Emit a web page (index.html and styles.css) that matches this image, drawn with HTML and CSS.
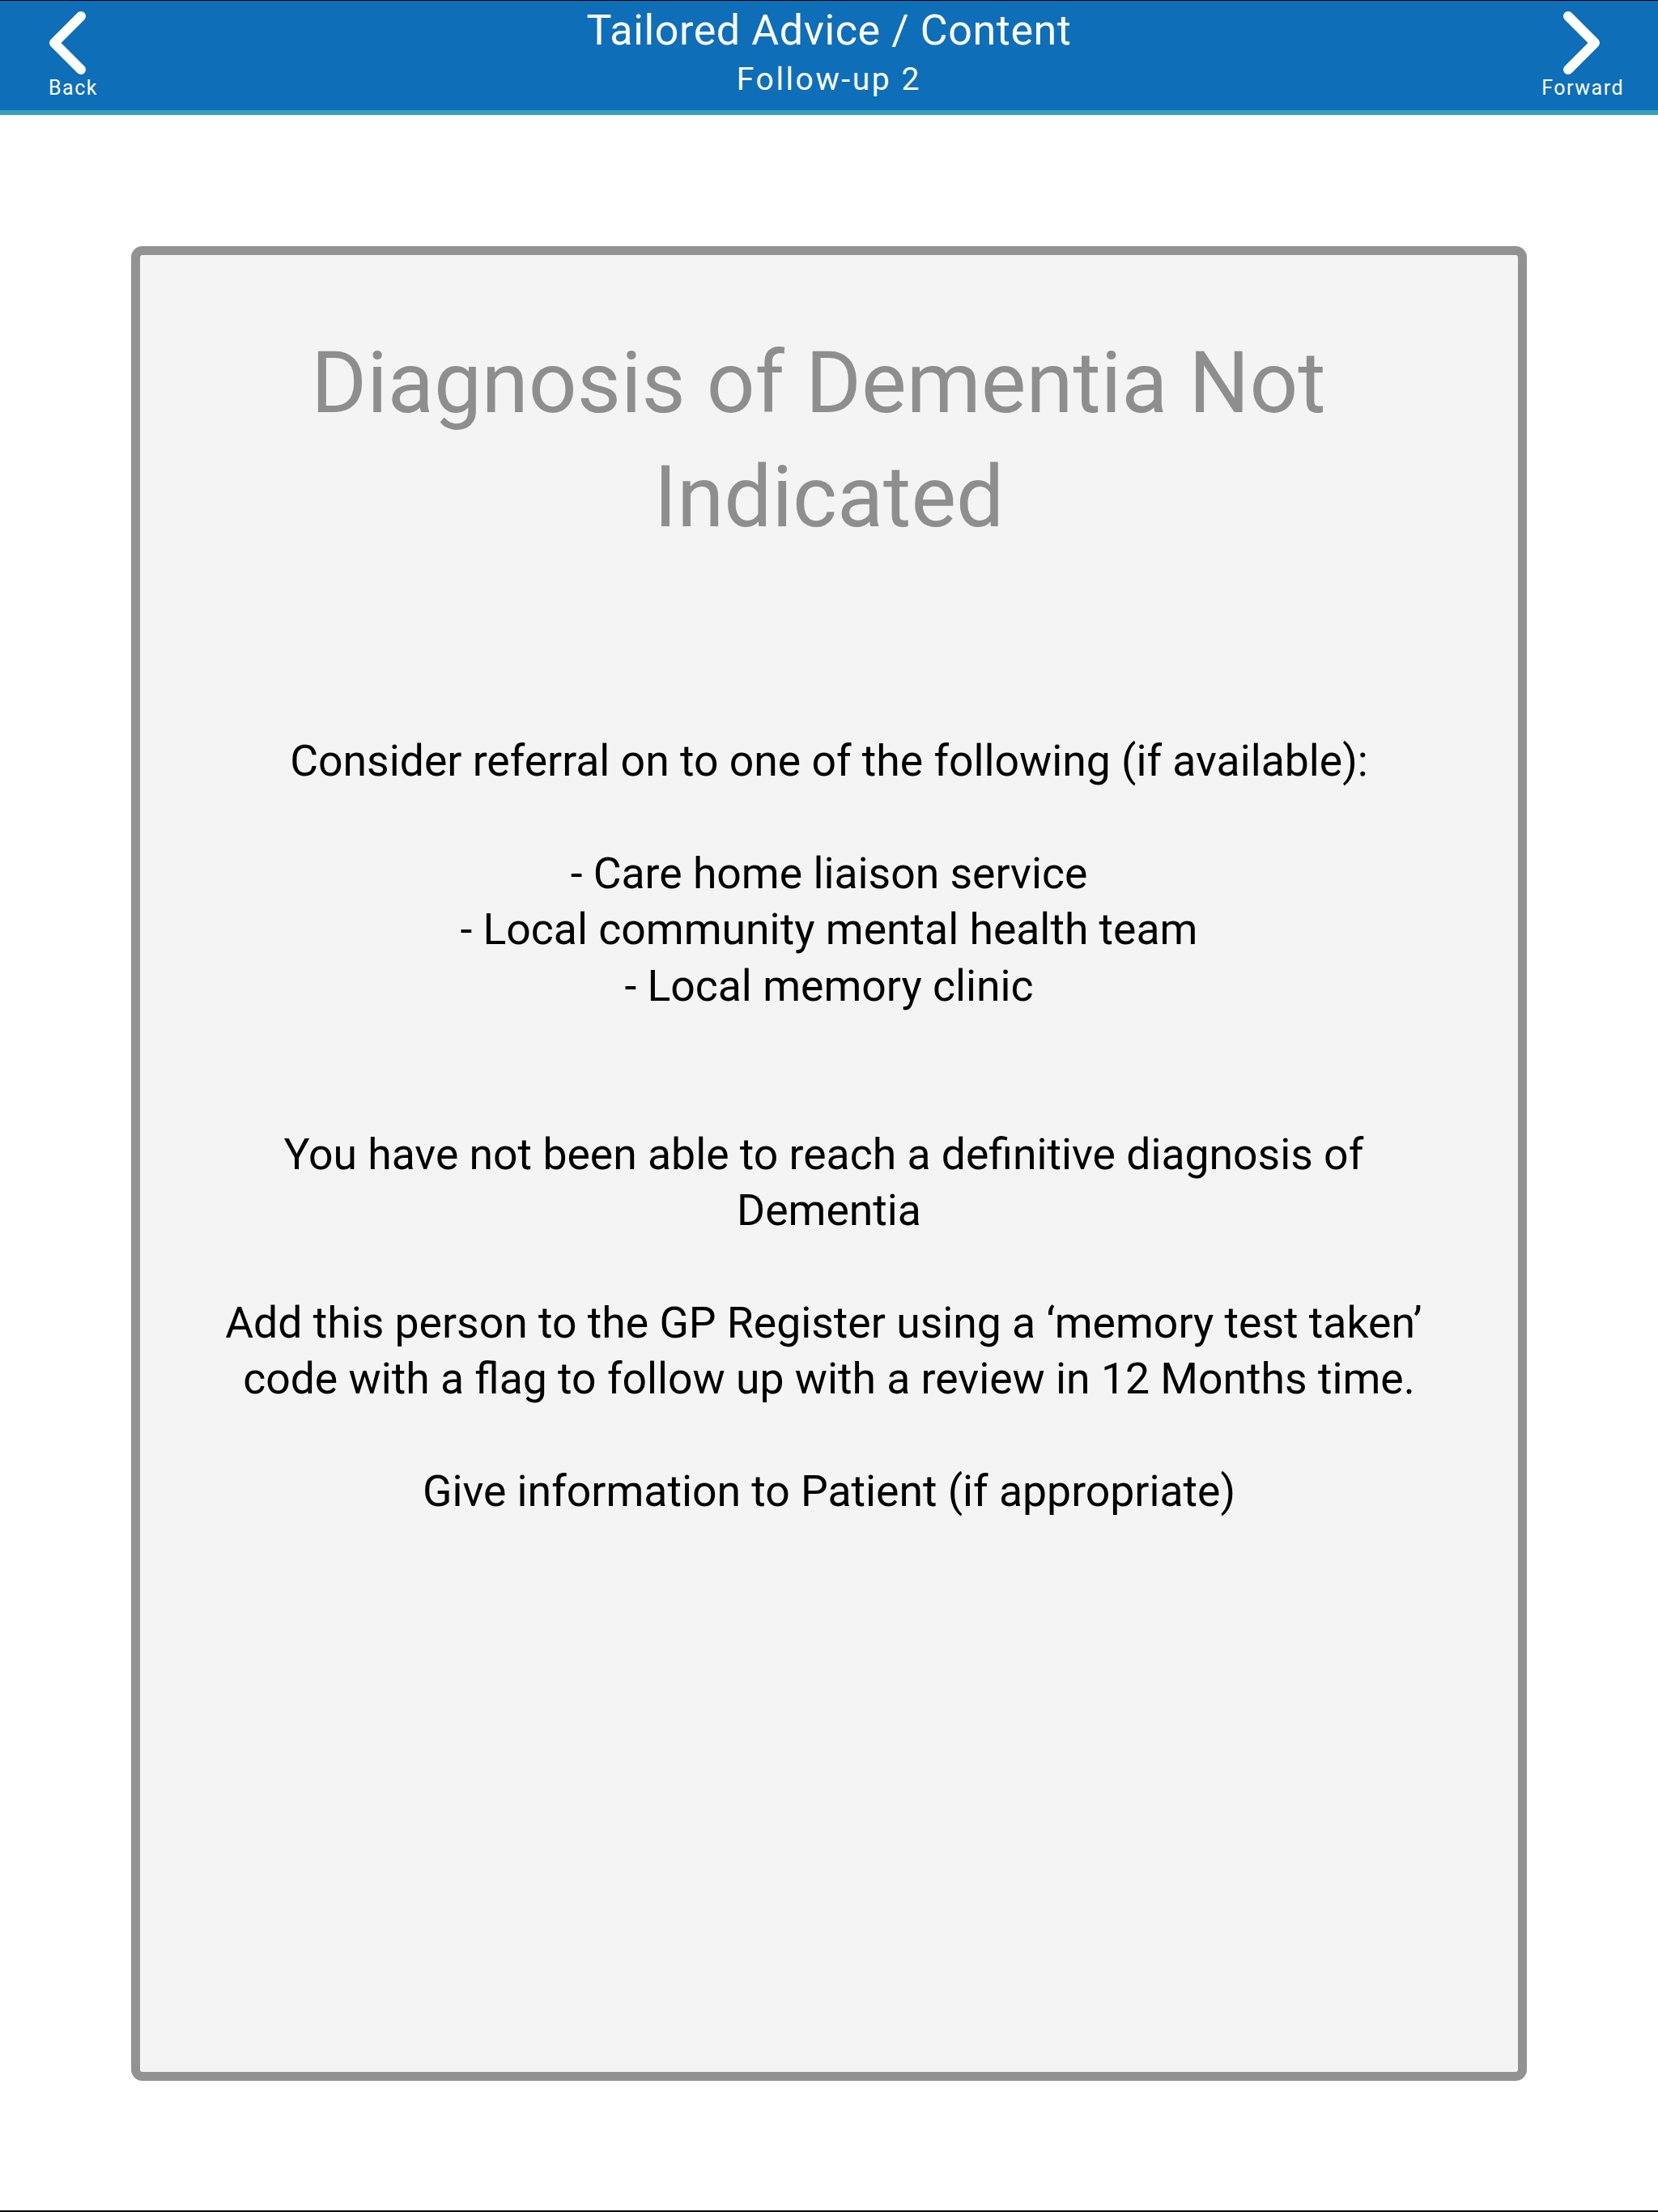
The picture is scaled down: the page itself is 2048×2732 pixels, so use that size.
FILE: index.html
```html
<!DOCTYPE html>
<html lang="en">
<head>
<meta charset="utf-8">
<title>Tailored Advice / Content</title>
<link rel="stylesheet" href="styles.css">
</head>
<body>
<div class="screen">
  <header class="nav">
    <a class="nav-btn nav-back">
      <svg class="chev" width="60" height="92" viewBox="0 0 60 92"><path d="M40 12 L7 45 L40 78" /></svg>
      <span class="nav-label">Back</span>
    </a>
    <div class="nav-title">
      <div class="nav-title-main">Tailored Advice / Content</div>
      <div class="nav-title-sub">Follow-up 2</div>
    </div>
    <a class="nav-btn nav-forward">
      <svg class="chev" width="60" height="92" viewBox="0 0 60 92"><path d="M12 12 L45 45 L12 78" /></svg>
      <span class="nav-label">Forward</span>
    </a>
  </header>
  <div class="nav-stripe"></div>
  <main class="content">
    <section class="card">
      <h1 class="card-title">Diagnosis of Dementia Not&nbsp;<br>Indicated</h1>
      <div class="card-body">
        <p>Consider referral on to one of the following (if available):</p>
        <p class="gap1">- Care home liaison service<br>- Local community mental health team<br>- Local memory clinic</p>
        <p class="gap2">You have not been able to reach a definitive diagnosis of&nbsp;<br>Dementia</p>
        <p class="gap1">Add this person to the GP Register using a ‘memory test taken’&nbsp;<br>code with a flag to follow up with a review in 12 Months time.</p>
        <p class="gap1">Give information to Patient (if appropriate)</p>
      </div>
    </section>
  </main>
</div>
</body>
</html>
```
FILE: styles.css
```css
html, body {
  margin: 0;
  padding: 0;
  background: #ffffff;
}
.screen {
  width: 2048px;
  height: 2732px;
  box-sizing: border-box;
  border-top: 1px solid #000;
  border-bottom: 2px solid #000;
  display: flex;
  flex-direction: column;
  font-family: Roboto, "Liberation Sans", sans-serif;
}
.nav {
  height: 135px;
  background: #0f6eb8;
  display: grid;
  grid-template-columns: 1fr auto 1fr;
  color: #ffffff;
}
.nav-btn {
  display: flex;
  flex-direction: column;
  align-items: center;
  padding-top: 7px;
}
.nav-back {
  justify-self: start;
  padding-left: 60px;
}
.nav-forward {
  justify-self: end;
  padding-right: 42px;
}
.chev path {
  fill: none;
  stroke: #ffffff;
  stroke-width: 12;
  stroke-linecap: round;
  stroke-linejoin: round;
}
.nav-label {
  font-size: 25px;
  line-height: 28px;
  margin-top: -5px;
  letter-spacing: 1.5px;
}
.nav-title {
  text-align: center;
  padding-top: 7px;
}
.nav-title-main {
  font-size: 52px;
  line-height: 60px;
  letter-spacing: 0.6px;
}
.nav-title-sub {
  font-size: 39px;
  line-height: 44px;
  margin-top: 8px;
  letter-spacing: 2.6px;
}
.nav-stripe {
  height: 6px;
  background: #3a9fba;
}
.content {
  flex: 1;
  padding: 162px 162px 160px 162px;
  display: flex;
}
.card {
  flex: 1;
  box-sizing: border-box;
  background: #f4f4f4;
  border: 11px solid #929292;
  border-radius: 14px;
  text-align: center;
  padding-top: 88px;
}
.card-title {
  margin: 0;
  font-weight: 400;
  font-size: 105px;
  line-height: 141px;
  color: #8e8e8e;
}
.card-body {
  margin-top: 220px;
  font-size: 53.5px;
  line-height: 69.4px;
  color: #000;
}
.card-body p {
  margin: 0;
}
.card-body .gap1 {
  margin-top: 69.4px;
}
.card-body .gap2 {
  margin-top: 138.8px;
}
```
